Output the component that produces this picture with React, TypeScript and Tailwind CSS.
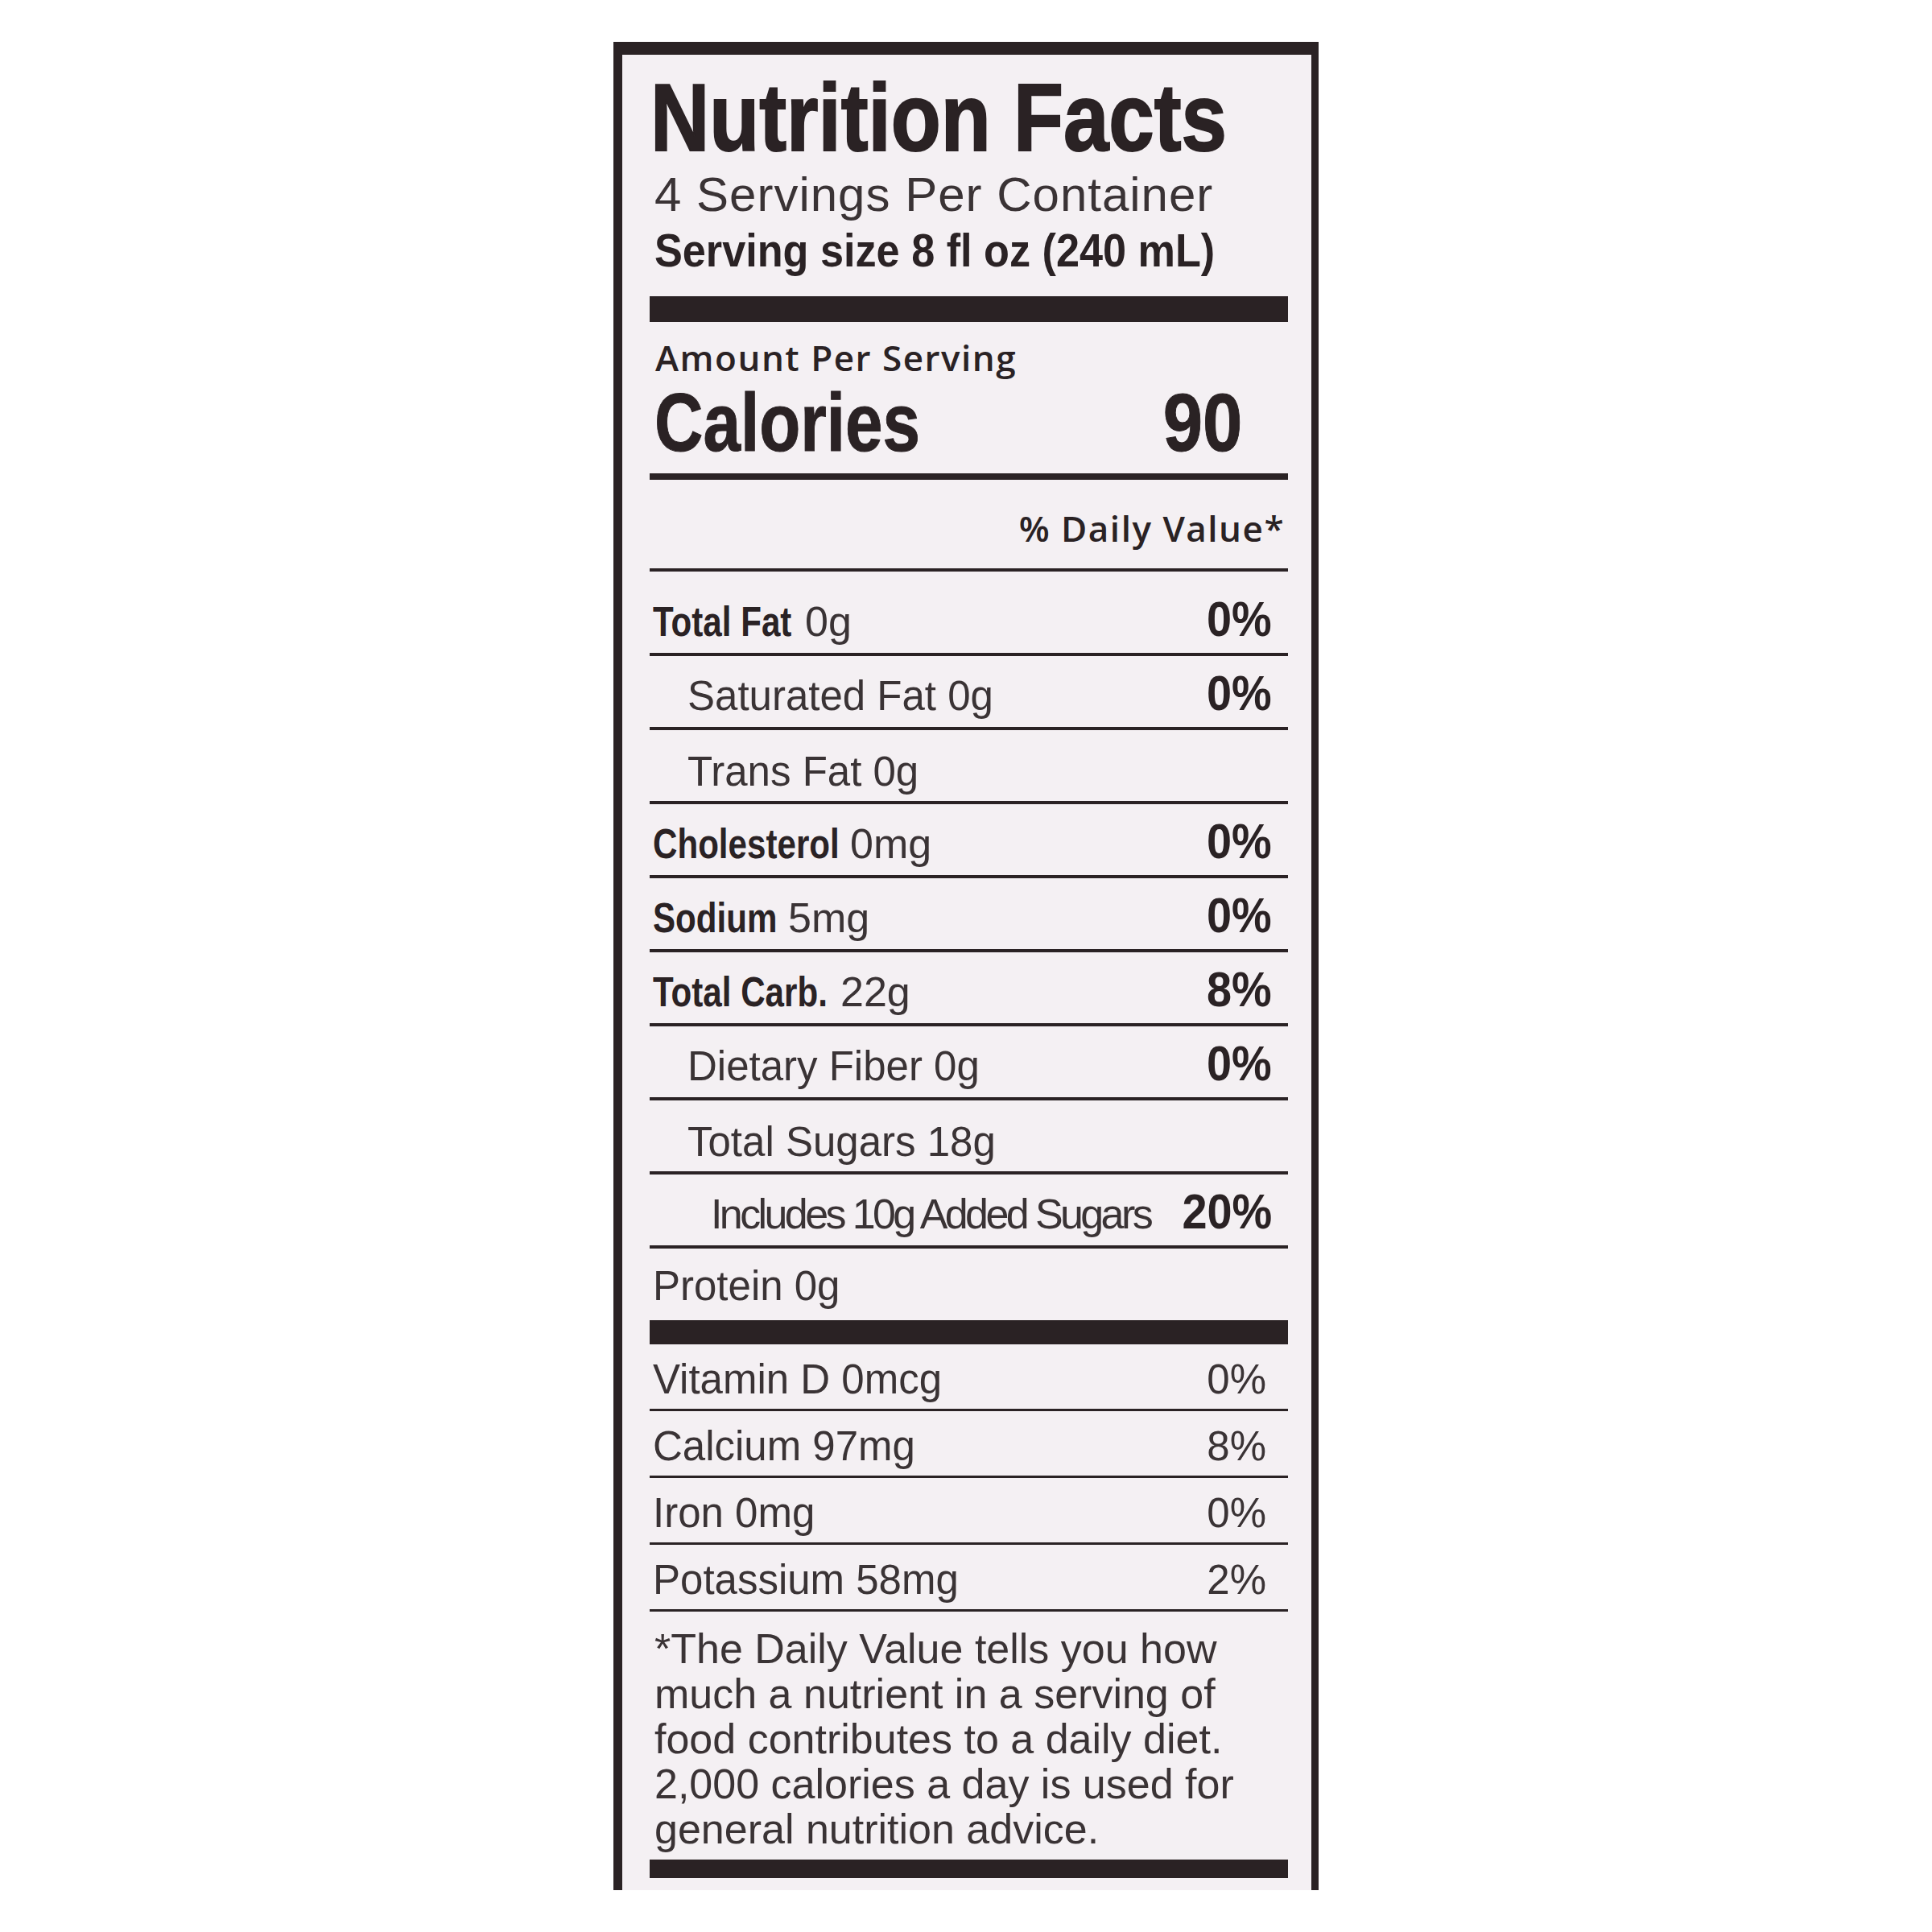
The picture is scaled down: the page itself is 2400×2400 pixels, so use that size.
import React from 'react';

// no condensed face is installed, so the heavy words are squeezed with scale-x
const plain = "font-['Liberation_Sans',Arial,sans-serif]";
const humanist = "font-['Open_Sans',sans-serif]";

const Rule = ({ className = 'h-[4px]' }: { className?: string }) => (
  <div className={`bg-[#2a2224] ${className}`} />
);

interface RowProps {
  height: string;
  pct?: string;
  children: React.ReactNode;
}

const NutrientRow: React.FC<RowProps> = ({ height, pct, children }) => (
  <div className={`flex flex-col justify-end ${height}`}>
    <div className={`${plain} flex items-baseline justify-between pb-[11px] pl-[4px] pr-[20px]`}>
      <div className="flex items-baseline whitespace-nowrap">{children}</div>
      {pct && (
        <span className="inline-block origin-right scale-x-[0.9] text-[62px] font-bold leading-none text-[#2a2224]">
          {pct}
        </span>
      )}
    </div>
  </div>
);

// bold nutrient name (condensed, boxed to its squeezed width) and its amount
const Main = ({ name, width, amount }: { name: string; width: string; amount: string }) => (
  <>
    <span className={`inline-block ${width}`}>
      <span className="inline-block origin-left scale-x-[0.81] text-[52px] font-bold leading-none text-[#2a2224]">
        {name}
      </span>
    </span>
    <span className="ml-[13px] text-[52px] leading-none text-[#3a3335]">{amount}</span>
  </>
);

const Sub = ({ children }: { children: React.ReactNode }) => (
  <span className="pl-[43px] text-[51px] leading-none text-[#3a3335]">{children}</span>
);

const vitamins = [
  { name: 'Vitamin D 0mcg', pct: '0%' },
  { name: 'Calcium 97mg', pct: '8%' },
  { name: 'Iron 0mg', pct: '0%' },
  { name: 'Potassium 58mg', pct: '2%' }
];

export default function App() {
  return (
    <div className="h-[2400px] w-[2400px] bg-white pl-[762px] pt-[52px]">
      <div className="h-[2296px] w-[876px] border-l-[11px] border-r-[9px] border-t-[16px] border-[#2a2224] bg-[#f4f0f3] pl-[34px] pr-[29px]">
        {/* header */}
        <h1 className={`${plain} mt-[19px] whitespace-nowrap pl-[1px] text-[118px] font-bold leading-none text-[#2a2224]`}>
          <span className="inline-block origin-left scale-x-[0.86] [-webkit-text-stroke:2px_#2a2224]">Nutrition Facts</span>
        </h1>
        <p className={`${plain} mt-[7px] whitespace-nowrap pl-[6px] text-[60px] leading-none tracking-[1px] text-[#3a3335]`}>
          4 Servings Per Container
        </p>
        <p className={`${plain} mt-[10px] whitespace-nowrap pl-[6px] text-[58px] font-bold leading-none text-[#2a2224]`}>
          <span className="inline-block origin-left scale-x-[0.9]">Serving size 8 fl oz (240 mL)</span>
        </p>
        <Rule className="mt-[28px] h-[32px]" />

        <p className={`${humanist} mt-[22px] whitespace-nowrap pl-[7px] text-[44px] font-semibold leading-none tracking-[1.5px] text-[#2a2224]`}>
          Amount Per Serving
        </p>
        <div className={`${plain} mt-[8px] flex items-baseline justify-between whitespace-nowrap pl-[6px] pr-[57px] text-[102px] font-bold leading-none text-[#2a2224]`}>
          <span className="inline-block origin-left scale-x-[0.82] [-webkit-text-stroke:1px_#2a2224]">Calories</span>
          <span className="inline-block origin-right scale-x-[0.87] [-webkit-text-stroke:1px_#2a2224]">90</span>
        </div>
        <Rule className="mt-[12px] h-[8px]" />

        <p className={`${humanist} mt-[38px] whitespace-nowrap pr-[4px] text-right text-[44px] font-semibold leading-none tracking-[1.5px] text-[#2a2224]`}>
          % Daily Value*
        </p>
        <Rule className="mt-[28px] h-[4px]" />

        {/* main nutrients */}
        <NutrientRow height="h-[101px]" pct="0%">
          <Main name="Total Fat" width="w-[176px]" amount="0g" />
        </NutrientRow>
        <Rule />
        <NutrientRow height="h-[88px]" pct="0%">
          <Sub>Saturated Fat 0g</Sub>
        </NutrientRow>
        <Rule />
        <NutrientRow height="h-[88px]">
          <Sub>Trans Fat 0g</Sub>
        </NutrientRow>
        <Rule />
        <NutrientRow height="h-[88px]" pct="0%">
          <Main name="Cholesterol" width="w-[232px]" amount="0mg" />
        </NutrientRow>
        <Rule />
        <NutrientRow height="h-[88px]" pct="0%">
          <Main name="Sodium" width="w-[155px]" amount="5mg" />
        </NutrientRow>
        <Rule />
        <NutrientRow height="h-[88px]" pct="8%">
          <Main name="Total Carb." width="w-[220px]" amount="22g" />
        </NutrientRow>
        <Rule />
        <NutrientRow height="h-[88px]" pct="0%">
          <Sub>Dietary Fiber 0g</Sub>
        </NutrientRow>
        <Rule />
        <NutrientRow height="h-[88px]">
          <Sub>Total Sugars 18g</Sub>
        </NutrientRow>
        <Rule />
        <NutrientRow height="h-[88px]" pct="20%">
          <span className="pl-[72px] text-[52px] leading-none tracking-[-3.6px] text-[#3a3335]">
            Includes 10g Added Sugars
          </span>
        </NutrientRow>
        <Rule />
        <div className="flex h-[89px] flex-col justify-end pb-[17px] pl-[4px]">
          <span className={`${plain} text-[51px] leading-none text-[#3a3335]`}>Protein 0g</span>
        </div>
        <Rule className="h-[30px]" />

        {/* vitamins and minerals */}
        {vitamins.map((v) => (
          <div key={v.name}>
            <div className="flex h-[80px] items-end">
              <div className={`${plain} flex w-full items-baseline justify-between pb-[11px] pl-[4px] pr-[27px] text-[51px] leading-none text-[#3a3335]`}>
                <span>{v.name}</span>
                <span>{v.pct}</span>
              </div>
            </div>
            <Rule className="h-[3px]" />
          </div>
        ))}

        {/* footnote */}
        <p className={`${plain} mt-[18px] whitespace-nowrap pl-[6px] text-[52px] leading-[56px] text-[#3a3335]`}>
          *The Daily Value tells you how
          <br />
          much a nutrient in a serving of
          <br />
          food contributes to a daily diet.
          <br />
          2,000 calories a day is used for
          <br />
          general nutrition advice.
        </p>
        <Rule className="mt-[10px] h-[23px]" />
      </div>
    </div>
  );
}
